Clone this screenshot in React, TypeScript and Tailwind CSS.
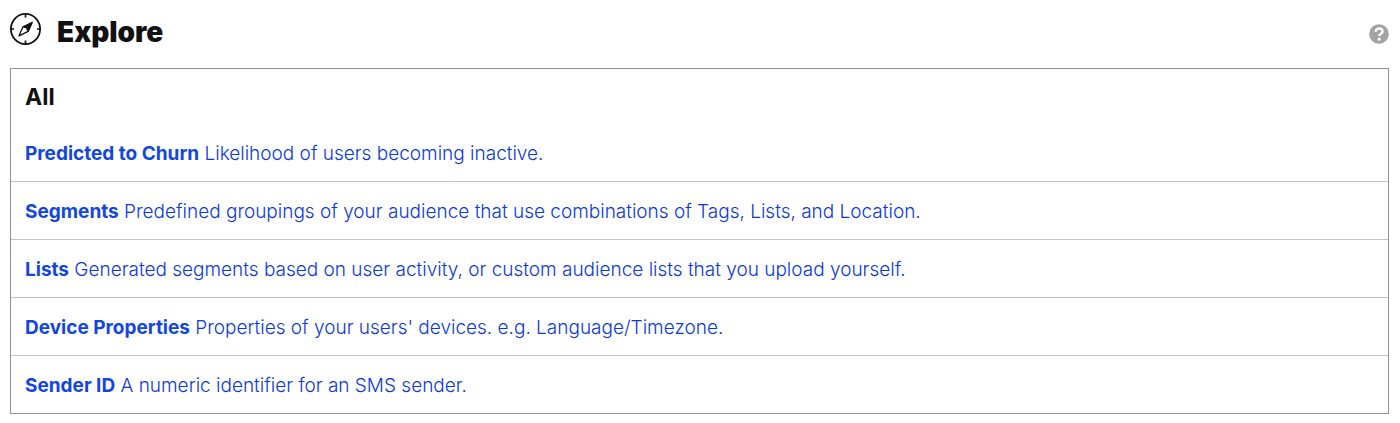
const items = [
  { name: "Predicted to Churn", text: "Likelihood of users becoming inactive." },
  { name: "Segments", text: "Predefined groupings of your audience that use combinations of Tags, Lists, and Location." },
  { name: "Lists", text: "Generated segments based on user activity, or custom audience lists that you upload yourself." },
  { name: "Device Properties", text: "Properties of your users' devices. e.g. Language/Timezone." },
  { name: "Sender ID", text: "A numeric identifier for an SMS sender." },
];

function CompassIcon() {
  return (
    <svg viewBox="0 0 32 34" className="h-[34px] w-8 shrink-0" fill="none" stroke="#111" aria-hidden="true">
      <ellipse cx="15.5" cy="17" rx="14.6" ry="15.2" strokeWidth="1.8" />
      <path d="M15.5 2v3.6M15.5 28.4V32M1 17h3M27 17h3" strokeWidth="1.7" />
      <path d="M22.2 10.4 13 14.8 9 23.8 18.2 19.4Z" strokeWidth="1.3" strokeLinejoin="round" />
      <path d="M22.4 10.2 13 14.8l5.2 4.6Z" fill="#111" stroke="none" />
      <circle cx="15.5" cy="17" r="1" fill="#fff" stroke="none" />
    </svg>
  );
}

function HelpIcon() {
  return (
    <svg viewBox="0 0 20 20" className="size-5" aria-hidden="true">
      <circle cx="10" cy="10" r="9.8" fill="#a3a3a3" />
      <path d="M6.7 7.8C6.7 5.7 8.1 4.6 10.1 4.6s3.4 1.1 3.4 2.9c0 2.2-3.2 2.3-3.2 4.6" fill="none" stroke="#fff" strokeWidth="2.5" />
      <circle cx="10.2" cy="15.2" r="1.6" fill="#fff" />
    </svg>
  );
}

export default function App() {
  return (
    <main className="bg-white pr-[11px] pl-[10px] pt-3 pb-[10px] font-['Inter','Liberation_Sans',sans-serif] text-[#111]">
      <header className="flex h-14 items-start justify-between">
        <div className="flex items-start gap-[15px]">
          <CompassIcon />
          <h1 className="pt-0.5 text-[28px] leading-9 font-black">Explore</h1>
        </div>
        <button type="button" aria-label="Help" className="mt-3">
          <HelpIcon />
        </button>
      </header>
      <section className="border border-[#929292]">
        <h2 className="h-[55px] px-[14px] pt-3 text-[23px] leading-8 font-bold">All</h2>
        <ul className="divide-y divide-[#c4c4c4]">
          {items.map((item) => (
            <li key={item.name}>
              <a href="#" className="block px-[14px] pt-[17px] pb-[15px] text-[19px] leading-[25px] font-[330] text-[#0a38e0] hover:underline">
                <strong className="font-bold text-[#1246e0]">{item.name}</strong> {item.text}
              </a>
            </li>
          ))}
        </ul>
      </section>
    </main>
  );
}
